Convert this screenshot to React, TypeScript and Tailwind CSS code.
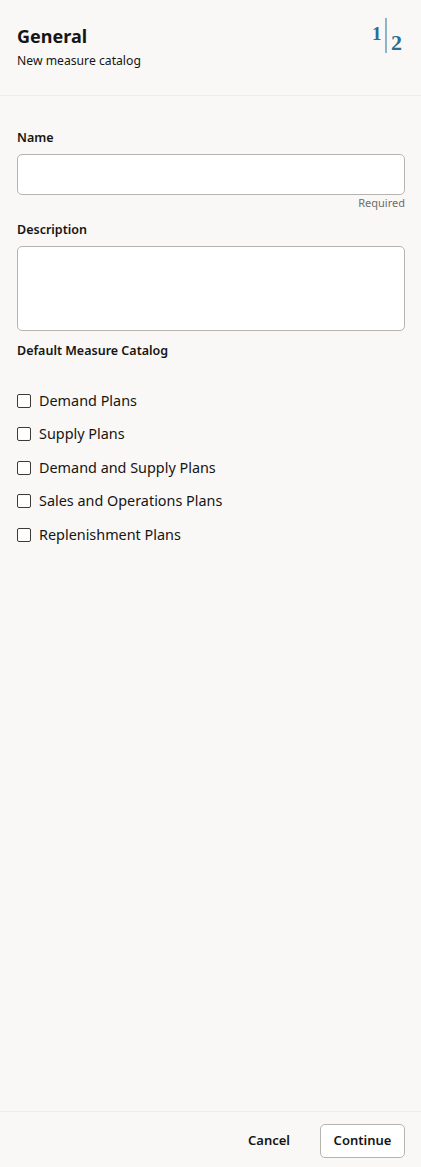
import React from "react";

const plans = [
  "Demand Plans",
  "Supply Plans",
  "Demand and Supply Plans",
  "Sales and Operations Plans",
  "Replenishment Plans",
];

export default function App() {
  return (
    <div
      className="flex flex-col h-[1167px] w-[421px] bg-[#f9f8f6] text-[#161513]"
      style={{ fontFamily: '"Noto Sans", "Open Sans", sans-serif' }}
    >
      <div className="relative h-[96px] shrink-0 border-b border-[#efedea] px-[17px] pt-[22px]">
        <div className="text-[18px] font-bold leading-[28px]">General</div>
        <div className="text-[12.2px] leading-[18px] mt-[2px]">New measure catalog</div>
        <div className="absolute right-[16px] top-[18px] h-[36px] w-[34px]">
          <span
            className="absolute left-[1px] top-[6px] text-[19px] leading-[19px] text-[#2b6d93] font-bold"
            style={{ fontFamily: '"Liberation Serif", "DejaVu Serif", serif' }}
          >
            1
          </span>
          <div className="absolute left-[14px] top-0 h-[35px] w-[1.5px] bg-[#8fb3c9]" />
          <span
            className="absolute left-[20px] top-[14px] text-[22px] leading-[22px] text-[#2b6d93] font-bold"
            style={{ fontFamily: '"Liberation Serif", "DejaVu Serif", serif' }}
          >
            2
          </span>
        </div>
      </div>

      <div className="flex-1 pl-[17px] pr-[16px] pt-[33px]">
        <div className="text-[12.5px] font-semibold leading-[18px]">Name</div>
        <div className="mt-[7px] h-[41px] rounded-[5px] border border-[#b7b4b0] bg-white" />
        <div className="mt-[1px] text-right text-[11px] leading-[14px] text-[#6f6c68]">Required</div>
        <div className="mt-[11px] text-[12.5px] font-semibold leading-[18px]">Description</div>
        <div className="mt-[7px] h-[85px] rounded-[5px] border border-[#b7b4b0] bg-white" />
        <div className="mt-[11px] text-[12.5px] font-semibold leading-[18px]">Default Measure Catalog</div>
        <div className="mt-[29px] flex flex-col gap-[10px]">
          {plans.map((p) => (
            <label key={p} className="flex h-[23.5px] items-center gap-[8px]">
              <span className="h-[14px] w-[14px] rounded-[2px] border-[1.5px] border-[#3d3b39] bg-white" />
              <span className="text-[14.4px] leading-[20px]">{p}</span>
            </label>
          ))}
        </div>
      </div>

      <div className="flex h-[56px] shrink-0 items-center justify-end gap-[15px] border-t border-[#efedea] px-[16px] pt-[2px]">
        <button className="h-[34px] px-[15px] text-[13px] font-semibold">Cancel</button>
        <button className="h-[34px] w-[85px] rounded-[5px] border border-[#b7b4b0] bg-white text-[13px] font-semibold">
          Continue
        </button>
      </div>
    </div>
  );
}
